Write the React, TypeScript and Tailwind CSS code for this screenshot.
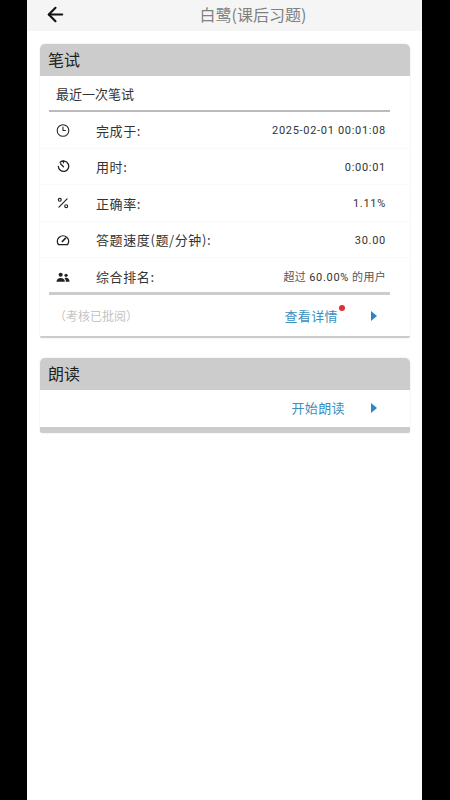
import { ArrowLeft, Clock3, Percent } from 'lucide-react'
import type { ReactNode } from 'react'

const font = { fontFamily: '"Noto Sans CJK SC", Roboto, sans-serif' }

function TimerIcon() {
  return (
    <svg width="13" height="13" viewBox="0 0 14 14" fill="none" stroke="#222" strokeWidth="1.4" strokeLinecap="round">
      <path d="M3.4 2.4A5.6 5.6 0 1 1 1.4 6.8" />
      <path d="M7 1.2V3" />
      <path d="M3.8 4 7 7.2" />
    </svg>
  )
}

function GaugeIcon() {
  return (
    <svg width="15" height="14" viewBox="0 0 15 14" fill="none" stroke="#222" strokeWidth="1.5" strokeLinecap="round">
      <path d="M2.6 12A6 6 0 1 1 12.4 12Z" />
      <path d="M6.8 8.6 10 5.2" strokeWidth="1.8" />
    </svg>
  )
}

function PeopleIcon() {
  return (
    <svg width="15" height="11" viewBox="0 0 15 11" fill="#222">
      <circle cx="5" cy="2.6" r="2.2" />
      <path d="M0.5 10c0-2.6 2-4 4.5-4s4.5 1.4 4.5 4Z" />
      <circle cx="10.8" cy="3.2" r="1.7" />
      <path d="M10.6 10c0-1.6-.5-2.9-1.6-3.8 .6-.3 1.2-.4 1.9-.4 2 0 3.6 1.2 3.6 4.2Z" />
    </svg>
  )
}

function Caret() {
  return <span className="h-0 w-0 border-y-[5px] border-l-[6px] border-y-transparent border-l-[#2a86c4]" />
}

function StatRow({ icon, label, children }: { icon: ReactNode; label: string; children: ReactNode }) {
  return (
    <div className="flex h-[36.5px] items-center border-b border-[#fafafa] pl-[16px] pr-[24px] pt-[1px] last:h-[34px] last:border-b-0 last:pt-[4px]">
      <span className="flex w-[14px] justify-center">{icon}</span>
      <span className="ml-[26px] flex-1 text-[13px] tracking-[0.6px] text-[#333]">{label}</span>
      <span className="pt-[2px] text-[11px] tracking-[0.7px] text-[#333]" style={{ fontFamily: 'Roboto, "Noto Sans CJK SC", sans-serif' }}>{children}</span>
    </div>
  )
}

export default function App() {
  return (
    <div className="flex h-[800px] w-[450px] overflow-hidden bg-black" style={font}>
      <div className="ml-[27px] h-full w-[395px] bg-white">
        <div className="relative flex h-[31px] items-center justify-center bg-[#f5f5f5] pb-[3px] pl-[57px]">
          <ArrowLeft size={23} color="#111" strokeWidth={2.2} className="absolute left-[17px] top-[3px]" />
          <span className="text-[16px] leading-none text-[#808080]">白鹭(课后习题)</span>
        </div>

        <div className="ml-[13px] mr-[12px] mt-[13px] overflow-hidden rounded-t-[5px] rounded-b-[2px] border-b-2 border-[#ccc] bg-white shadow-[0_0_2px_rgba(0,0,0,0.12)]">
          <div className="flex h-[32px] items-center bg-[#ccc] pb-[2px] pl-[8px] text-[16px] text-[#222]">笔试</div>
          <div className="ml-[9px] mr-[20px] flex h-[36px] items-center border-b-2 border-[#bbb] pl-[7px] pt-[2px] text-[13px] text-[#333]">最近一次笔试</div>
          <div>
            <StatRow icon={<Clock3 size={15} color="#222" strokeWidth={1.8} />} label="完成于:">2025-02-01 00:01:08</StatRow>
            <StatRow icon={<TimerIcon />} label="用时:">0:00:01</StatRow>
            <StatRow icon={<Percent size={14} color="#222" strokeWidth={2} />} label="正确率:">1.11%</StatRow>
            <StatRow icon={<GaugeIcon />} label="答题速度(题/分钟):">30.00</StatRow>
            <StatRow icon={<PeopleIcon />} label="综合排名:">
              <span className="tracking-[0.3px] text-[#555]">超过 </span>
              <span>60.00%</span>
              <span className="tracking-[0.3px] text-[#555]"> 的用户</span>
            </StatRow>
          </div>
          <div className="ml-[9px] mr-[20px] h-[3px] bg-[#ccc]" />
          <div className="flex h-[41px] items-center pl-[14px] pr-[33px]">
            <span className="flex-1 text-[12px] text-[#c4c4c4]">（考核已批阅）</span>
            <span className="relative text-[13px] tracking-[0.4px] text-[#3a8fc0]">
              查看详情
              <span className="absolute right-[-7px] top-[-1px] h-[6px] w-[6px] rounded-full bg-[#e03030]" />
            </span>
            <span className="ml-[33px] flex"><Caret /></span>
          </div>
        </div>

        <div className="ml-[13px] mr-[12px] mt-[20px] overflow-hidden rounded-t-[5px] rounded-b-[2px] bg-white shadow-[0_0_2px_rgba(0,0,0,0.12)]">
          <div className="flex h-[32px] items-center bg-[#ccc] pb-[2px] pl-[8px] text-[16px] text-[#222]">朗读</div>
          <div className="flex h-[37px] items-center justify-end pb-[1px] pr-[33px]">
            <span className="text-[13px] tracking-[0.4px] text-[#3a8fc0]">开始朗读</span>
            <span className="ml-[26px] flex"><Caret /></span>
          </div>
          <div className="h-[6px] bg-[#ccc]" />
        </div>
      </div>
    </div>
  )
}
